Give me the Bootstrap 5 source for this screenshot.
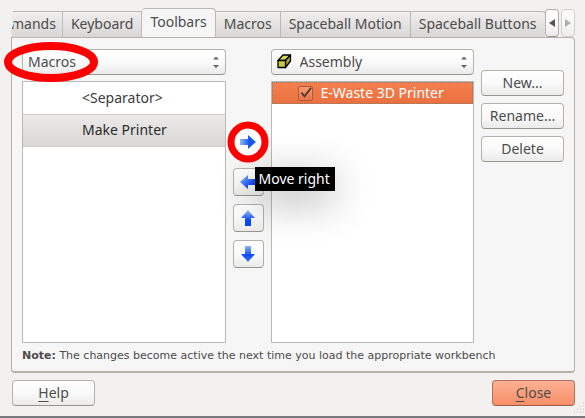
<!DOCTYPE html>
<html lang="en">
<head>
<meta charset="utf-8">
<meta name="viewport" content="width=device-width, initial-scale=1">
<title>Customize</title>
<link href="https://cdn.jsdelivr.net/npm/bootstrap@5.3.0/dist/css/bootstrap.min.css" rel="stylesheet">
<style>
  body { background: #f2f1f0; color: #4c4c4c; font-family: "Noto Sans", "Open Sans", sans-serif; font-size: 14px; line-height: 20px; }
  .dialog { padding: 8px 10px 10px 11px; border-bottom: 2px solid #77787a; }
  .tabstrip { height: 30px; }
  .tab-page { height: 27px; padding: 1px 8px 2px; border: 1px solid #bbb9b6; border-left: 0; border-radius: 0; background: linear-gradient(#f0efee, #d9d7d5); color: #4c4c4c; white-space: nowrap; }
  .tab-cut { padding-left: 0; padding-right: 6px; clip-path: polygon(2px 0, 0 6px, 3px 12px, 0 19px, 1px 100%, 100% 100%, 100% 0); }
  .tab-current { height: 30px; padding-bottom: 3px; border-bottom-color: #f6f6f6; border-radius: 4px 4px 0 0; background: #f6f6f6; }
  .tab-end { border-radius: 0 4px 0 0; }
  .face { border: 1px solid #b5b2ae; border-bottom-color: #989590; border-radius: 4px; background: linear-gradient(#fff, #fafafa 50%, #ebebeb); color: #4c4c4c; }
  .scrollers { gap: 2px; padding-top: 1px; }
  .scroller { width: 14px; height: 28px; padding: 0; }
  .scroller:disabled { border-color: #c8c6c3; opacity: .75; }
  .panel { margin-top: -1px; padding: 11px 10px 8px; border: 1px solid #b5b1ac; border-bottom-width: 2px; border-radius: 0 4px 4px 4px; background: #f6f6f6; }
  .columns { display: grid; grid-template-columns: 1fr 31px 1fr 83px; column-gap: 7px; }
  .picker-row { margin-bottom: 6px; }
  .picker { height: 26px; padding: 1px 20px 1px 5px; font-size: 14px; line-height: 20px; box-shadow: none;
    background: url("data:image/svg+xml,%3Csvg xmlns='http://www.w3.org/2000/svg' width='6' height='12'%3E%3Cpath d='M0 3.5L3 .5l3 3zM0 9l3 3 3-3z' fill='%23666'/%3E%3C/svg%3E") no-repeat right 6px center, linear-gradient(#fff, #fafafa 50%, #ebebeb); }
  .picker-icon { padding-left: 28px; }
  .cube { left: 6px; top: 5px; }
  .pane { border: 1px solid #bab8b4; background: #fff; }
  .entry { padding: 6px 0 6px 59px; border: 0; background: transparent; color: #3c3c3c; text-align: left; }
  .entry-picked { padding-top: 5px; border-top: 1px solid #cfcdca; border-bottom: 1px solid #cfcdca; background: linear-gradient(#ecebea, #d9d7d5); color: #2c2c2c; }
  .entry-hot { height: 22px; padding: 0 0 0 26px; background: linear-gradient(#f4804f, #ea6f3e); color: #fff; outline: 1px dotted #8a8175; outline-offset: -1px; }
  .tick { appearance: none; width: 15px; height: 15px; margin: 0 8px 0 0; border: 1px solid #b0583a; border-radius: 2px; background: url("data:image/svg+xml,%3Csvg xmlns='http://www.w3.org/2000/svg' viewBox='0 0 14 14'%3E%3Cpath d='M2.500 6l3.500 4 7-9' fill='none' stroke='%23513a32' stroke-width='2'/%3E%3C/svg%3E"), linear-gradient(#f79a74, #ea7549); }
  .movers { padding-top: 79px; gap: 8px; }
  .mover { width: 31px; height: 28px; padding: 0; }
  .mover svg { display: block; margin: auto; }
  .ring-oval { left: -18px; top: -8px; }
  .ring { left: -6px; top: -7px; }
  .hint { left: 22px; top: 39px; padding: 2px 5px 2px 4px; background: #000; color: #fff; white-space: nowrap; box-shadow: 0 10px 40px rgba(0,0,0,.32); z-index: 5; }
  .actions { gap: 7px; padding-top: 21px; }
  .push { width: 83px; height: 26px; padding: 2px 0; font-size: 14px; line-height: 20px; }
  .push-main { border-color: #b3715a; border-bottom-color: #9c5b45; background: linear-gradient(#fdb194, #f98f69); }
  .note { padding-top: 5px; font-family: "DejaVu Sans", sans-serif; font-size: 11px; line-height: 15px; }
  .buttons { padding: 7px 0 0 1px; }
  .grip { right: 0; bottom: 2px; }
  u { text-underline-offset: 3px; }
</style>
</head>
<body>
<svg width="0" height="0" class="position-absolute" aria-hidden="true">
  <defs>
    <linearGradient id="blue" x1="0" y1="0" x2="1" y2="0"><stop offset="0" stop-color="#8fb6f5"/><stop offset=".6" stop-color="#1455f5"/><stop offset="1" stop-color="#2c68e8"/></linearGradient>
    <linearGradient id="blueLeft" x1="0" y1="0" x2="1" y2="1"><stop offset="0" stop-color="#9cc4ee"/><stop offset=".7" stop-color="#0a48ff"/></linearGradient>
    <linearGradient id="blueUp" x1="0" y1="0" x2="0" y2="1"><stop offset="0" stop-color="#9cc4ee"/><stop offset=".65" stop-color="#0a48ff"/></linearGradient>
    <linearGradient id="blueDown" x1="0" y1="0" x2="0" y2="1"><stop offset="0" stop-color="#8ab6f0"/><stop offset=".6" stop-color="#0a48ff"/><stop offset="1" stop-color="#4a86e8"/></linearGradient>
  </defs>
</svg>
<div class="dialog min-vh-100 d-flex flex-column position-relative">
  <div class="tabstrip d-flex align-items-end">
    <div class="d-flex align-items-end flex-grow-1 overflow-hidden" role="tablist">
      <button type="button" role="tab" class="tab-page tab-cut">mands</button>
      <button type="button" role="tab" class="tab-page">Keyboard</button>
      <button type="button" role="tab" class="tab-page tab-current" aria-selected="true">Toolbars</button>
      <button type="button" role="tab" class="tab-page">Macros</button>
      <button type="button" role="tab" class="tab-page">Spaceball Motion</button>
      <button type="button" role="tab" class="tab-page tab-end">Spaceball Buttons</button>
    </div>
    <div class="scrollers d-flex flex-shrink-0 align-self-start">
      <button type="button" class="face scroller d-flex align-items-center justify-content-center" aria-label="Previous tabs"><svg width="6" height="8"><path d="M6 0v8L0 4z" fill="#555"/></svg></button>
      <button type="button" class="face scroller d-flex align-items-center justify-content-center" aria-label="Next tabs" disabled><svg width="6" height="8"><path d="M0 0v8l6-4z" fill="#999"/></svg></button>
    </div>
  </div>
  <main class="panel flex-grow-1 d-flex flex-column">
    <div class="columns flex-grow-1">
      <section class="d-flex flex-column">
        <div class="picker-row position-relative">
          <select class="form-select face picker" aria-label="Category"><option>Macros</option></select>
          <svg class="ring-oval position-absolute pe-none" width="96" height="42"><ellipse cx="47" cy="21" rx="43" ry="16" fill="none" stroke="#f00" stroke-width="8"/></svg>
        </div>
        <div class="pane flex-grow-1 d-flex flex-column">
          <button type="button" class="entry">&lt;Separator&gt;</button>
          <button type="button" class="entry entry-picked">Make Printer</button>
        </div>
      </section>
      <div class="movers d-flex flex-column">
        <div class="position-relative">
          <button type="button" class="face mover" aria-label="Move right"><svg width="16" height="16" viewBox="0 0 16 16"><path d="M0 5h8V1l8 7-8 7v-4H0z" fill="url(#blue)"/></svg></button>
          <svg class="ring position-absolute pe-none" width="42" height="42"><circle cx="21" cy="21" r="17" fill="#fff" stroke="#f00" stroke-width="7"/><path d="M13 18h8v-4l8 7-8 7v-4h-8z" fill="url(#blue)"/></svg>
          <div class="hint position-absolute" role="tooltip">Move right</div>
        </div>
        <button type="button" class="face mover" aria-label="Move left"><svg width="16" height="16" viewBox="0 0 16 16"><path d="M16 5H8V1L0 8l8 7v-4h8z" fill="url(#blueLeft)"/></svg></button>
        <button type="button" class="face mover" aria-label="Move up"><svg width="16" height="16" viewBox="0 0 16 16"><path d="M5 16V8H1l7-8 7 8h-4v8z" fill="url(#blueUp)"/></svg></button>
        <button type="button" class="face mover" aria-label="Move down"><svg width="16" height="16" viewBox="0 0 16 16"><path d="M5 0v8H1l7 8 7-8h-4V0z" fill="url(#blueDown)"/></svg></button>
      </div>
      <section class="d-flex flex-column">
        <div class="picker-row position-relative">
          <select class="form-select face picker picker-icon" aria-label="Workbench"><option>Assembly</option></select>
          <svg class="cube position-absolute pe-none" width="15" height="15" viewBox="0 0 15 15" stroke="#000" stroke-width="1.300" stroke-linejoin="round"><path d="M1 6.500L6 1h7.500L8.500 6.500z" fill="#d6d64a"/><path d="M8.500 6.500l5-5.500v6l-5 6.500z" fill="#a8a82c"/><path d="M1 6.500h7.500v7H1z" fill="#caca3c"/></svg>
        </div>
        <div class="pane flex-grow-1">
          <div class="entry entry-hot d-flex align-items-center">
            <input type="checkbox" class="tick" id="printer" checked><label for="printer">E-Waste 3D Printer</label>
          </div>
        </div>
      </section>
      <div class="actions d-flex flex-column">
        <button type="button" class="face push">New...</button>
        <button type="button" class="face push">Rename...</button>
        <button type="button" class="face push">Delete</button>
      </div>
    </div>
    <div class="note"><b>Note:</b> The changes become active the next time you load the appropriate workbench</div>
  </main>
  <footer class="buttons d-flex justify-content-between">
    <button type="button" class="face push"><u>H</u>elp</button>
    <button type="button" class="face push push-main"><u>C</u>lose</button>
  </footer>
  <svg class="grip position-absolute pe-none" width="11" height="12" aria-hidden="true"><path d="M9 1h1M6 4h1m2 0h1M3 7h1m2 0h1m2 0h1M0 10h1m2 0h1m2 0h1m2 0h1" stroke="#c5c3c0" stroke-width="1"/></svg>
</div>
<script src="https://cdn.jsdelivr.net/npm/bootstrap@5.3.0/dist/js/bootstrap.bundle.min.js"></script>
</body>
</html>
